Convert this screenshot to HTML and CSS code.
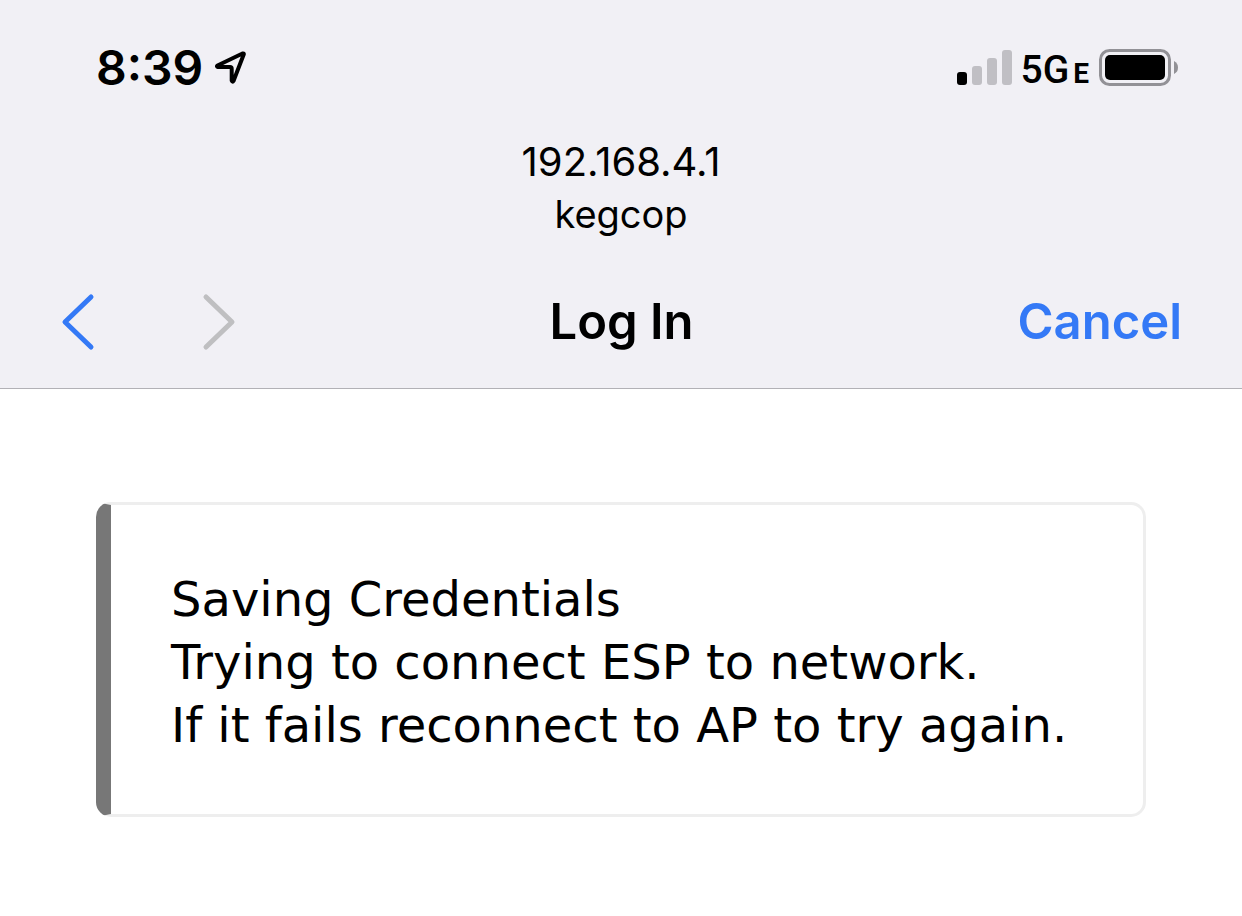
FILE: index.html
```html
<!DOCTYPE html>
<html lang="en">
<head>
<meta charset="utf-8">
<meta name="viewport" content="width=device-width, initial-scale=1">
<title>Log In</title>
<link rel="stylesheet" href="styles.css">
</head>
<body>
<header class="top">
  <div class="status">
    <div class="clock">
      <time>8:39</time>
      <svg class="location" width="32" height="36" viewBox="0 0 32 36" aria-hidden="true"><path d="M2.500 15.500 27.500 3.500Q29.500 3 28.500 5L18.500 31Q17.500 32.500 16.700 30.500V18.700Q16.700 17 15 17L3 17Q1.200 16.500 2.500 15.500Z"/></svg>
    </div>
    <div class="indicators">
      <svg class="signal" width="56" height="36" viewBox="0 0 56 36" aria-hidden="true">
        <rect class="bar on" x="0" y="22" width="10" height="13" rx="3"/>
        <rect class="bar" x="15" y="16" width="10" height="19" rx="3"/>
        <rect class="bar" x="30" y="8" width="10" height="27" rx="3"/>
        <rect class="bar" x="45" y="0" width="10" height="35" rx="3"/>
      </svg>
      <span class="network">5G<small>E</small></span>
      <svg class="battery" width="80" height="38" viewBox="0 0 80 38" aria-hidden="true">
        <rect class="shell" x="1.500" y="1.500" width="69" height="34" rx="9"/>
        <rect x="6" y="6" width="60" height="25" rx="5"/>
        <path class="cap" d="M75 12Q79 14 79 18.500T75 25Z"/>
      </svg>
    </div>
  </div>
  <div class="address">
    <p class="host">192.168.4.1</p>
    <p>kegcop</p>
  </div>
  <nav class="toolbar">
    <div class="history">
      <button type="button" class="arrow" aria-label="Back"><svg width="34" height="58" viewBox="0 0 34 58"><path d="M30 4 4 29 30 54"/></svg></button>
      <button type="button" class="arrow" aria-label="Forward" disabled><svg width="34" height="58" viewBox="0 0 34 58"><path d="M4 4 30 29 4 54"/></svg></button>
    </div>
    <h1>Log In</h1>
    <button type="button" class="cancel">Cancel</button>
  </nav>
</header>
<main class="content">
  <div class="message">Saving Credentials<br>Trying to connect ESP to network.<br>If it fails reconnect to AP to try again.</div>
</main>
</body>
</html>
```
FILE: styles.css
```css
* { box-sizing: border-box; }
body {
  margin: 0;
  background: #fff;
  color: #000;
  font-family: Inter, "Liberation Sans", sans-serif;
}
p, h1 { margin: 0; }
svg { display: block; flex: none; }
button {
  padding: 0;
  border: 0;
  background: none;
  font: inherit;
}
.top {
  background: #f1f0f5;
  border-bottom: 1px solid #b2b1b6;
}
.status {
  display: flex;
  justify-content: space-between;
  align-items: center;
  height: 136px;
  padding: 0 63px 0 96px;
}
.clock, .indicators { display: flex; align-items: center; }
.clock { gap: 12px; }
.clock time { font-size: 48px; font-weight: 600; line-height: 56px; }
.location { fill: none; stroke: #000; stroke-width: 4; stroke-linejoin: round; }
.bar { fill: #c0bfc4; }
.bar.on { fill: #000; }
.indicators { gap: 8px; }
.network {
  padding: 8px 2px 0 0;
  font-family: Roboto, sans-serif;
  font-size: 39px;
  font-weight: 500;
  line-height: 44px;
}
.network small { margin-left: 4px; font-size: 28px; font-weight: 700; }
.shell { fill: none; stroke: #929196; stroke-width: 3; }
.cap { fill: #929196; }
.address {
  margin-top: -1px;
  font-size: 38px;
  line-height: 53px;
  text-align: center;
}
.host { font-size: 40px; }
.toolbar {
  display: grid;
  grid-template-columns: 1fr auto 1fr;
  align-items: center;
  height: 147px;
  padding: 15px 60px 0 61px;
}
.history { display: flex; gap: 107px; }
.arrow { color: #3479f6; }
.arrow:disabled { color: #bfbfc1; }
.arrow path {
  fill: none;
  stroke: currentColor;
  stroke-width: 5;
  stroke-linecap: round;
  stroke-linejoin: round;
}
h1 { font-size: 49px; font-weight: 600; line-height: 60px; }
.cancel {
  justify-self: end;
  color: #3479f6;
  font-size: 49px;
  font-weight: 600;
  line-height: 60px;
}
.content { padding: 113px 96px 96px; }
.message {
  padding: 63px 60px 57px;
  border: 3px solid #eee;
  border-left: 15px solid #777;
  border-radius: 15px;
  font-family: Verdana, "DejaVu Sans", sans-serif;
  font-size: 48px;
  line-height: 63px;
}
```
